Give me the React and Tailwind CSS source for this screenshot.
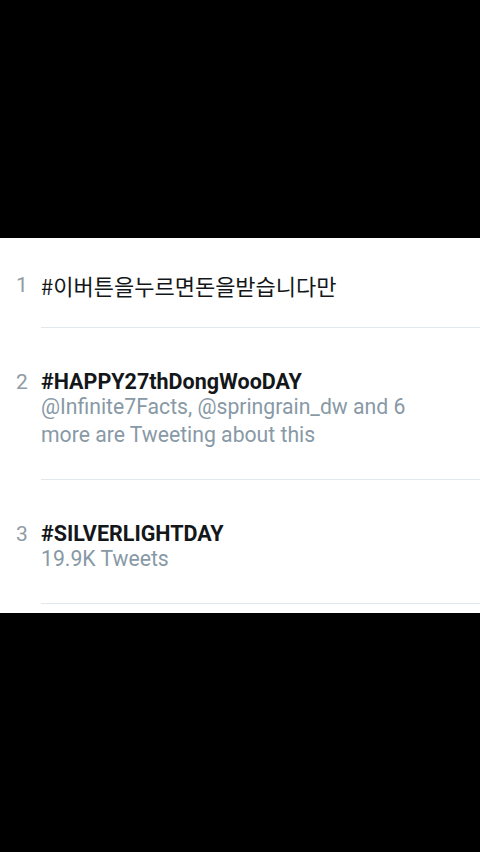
const trends = [
  { rank: 1, name: "#이버튼을누르면돈을받습니다만", korean: true },
  { rank: 2, name: "#HAPPY27thDongWooDAY", meta: "@Infinite7Facts, @springrain_dw and 6 more are Tweeting about this" },
  { rank: 3, name: "#SILVERLIGHTDAY", meta: "19.9K Tweets" },
];

const TrendRow = ({ rank, name, meta, korean, first }) => (
  <div className="flex">
    <div className={`w-[41px] shrink-0 pl-[16px] text-[21px] leading-[24px] text-[#8f9ba5] ${first ? "pt-[35px]" : "pt-[42px]"}`}>
      {rank}
    </div>
    <div className={`flex-1 border-b border-[#e1e8ed] pb-[30px] ${first ? "pt-[35px]" : "pt-[42px]"}`}>
      {korean ? (
        <div className="text-[22px] font-normal leading-[24px] text-[#14171a] font-['Noto_Sans_CJK_KR',sans-serif]">{name}</div>
      ) : (
        <div className="text-[21.5px] font-bold leading-[24px] text-[#14171a]">{name}</div>
      )}
      {meta && <div className="-mt-px pr-[50px] text-[21.2px] leading-[28px] text-[#8899a6]">{meta}</div>}
    </div>
  </div>
);

const App = () => {
  return (
    <div className="flex h-[852px] w-[480px] flex-col bg-black font-['Roboto',sans-serif]">
      <div className="h-[238px] shrink-0" />
      <div className="bg-white pb-[9px]">
        {trends.map((t, i) => (
          <TrendRow key={t.rank} {...t} first={i === 0} />
        ))}
      </div>
    </div>
  );
};

export default App;
